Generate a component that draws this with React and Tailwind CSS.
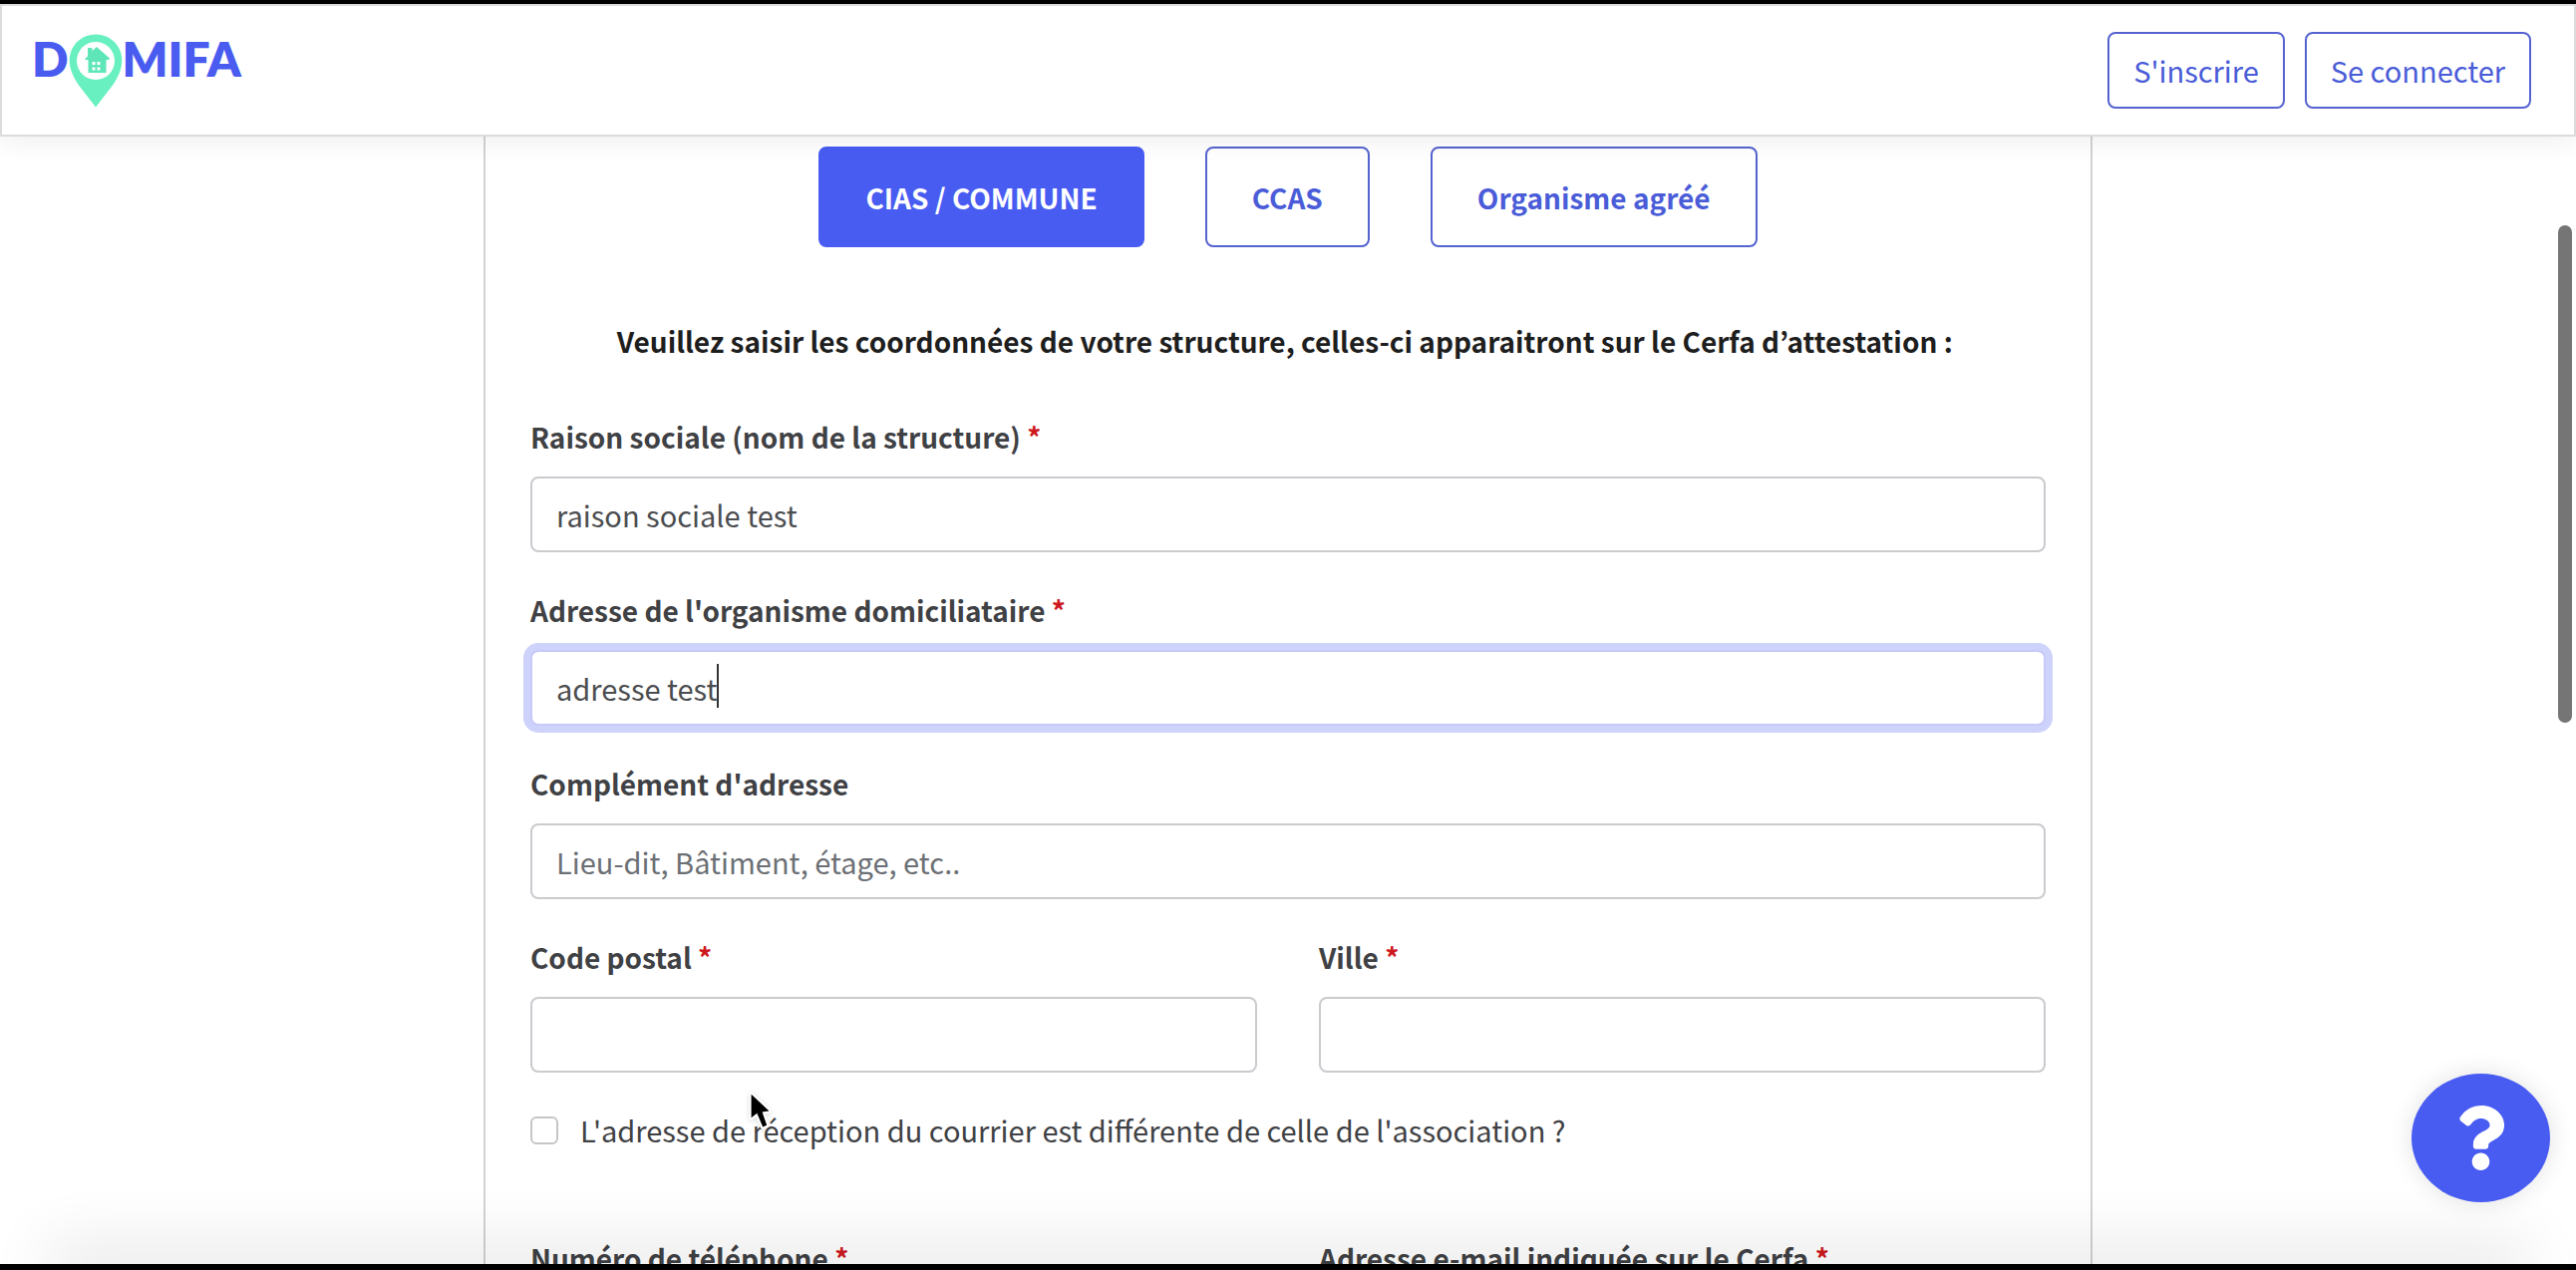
import { useId } from "react";
import { FaQuestion } from "react-icons/fa";

function Logo() {
  return (
    <a href="#accueil" aria-label="Domifa" className="flex items-start font-['Lato',sans-serif] text-[48px] leading-[54px] font-extrabold text-[#4a5cf0]">
      <span>D</span>
      <svg viewBox="0 0 54 74" className="mt-0.5 h-[74px] w-[54px]" aria-hidden="true">
        <path d="M27 .5C12.300.5.7 12 .7 26.500C.7 36 5 44 10 51.500L27 73.500L44 51.500C49 44 53.300 36 53.300 26.500C53.300 12 41.700.5 27 .5Z" fill="#68f0c0" />
        <circle cx="27" cy="27" r="19" fill="#fff" />
        <path d="M19 14h4.500v3l4.500-4 13 11.500-1 1.500H37.500V39H19.500V26H16.500v-1.500l2.500-2Z" fill="#5fe6b8" />
        <path d="M23.500 28h3v3h-3zM28.500 28h3v3h-3zM23.500 33.500h3v3h-3zM28.500 33.500h3v3h-3z" fill="#fff" />
      </svg>
      <span>MIFA</span>
    </a>
  );
}

function Field({ label, required, className = "", focused, ...props }) {
  const id = useId();
  return (
    <div className={className}>
      <label htmlFor={id} className="block h-[58px] text-[28px] leading-9 font-bold">
        {label} {required && <span className="text-[#ce1a1f]">*</span>}
      </label>
      <div className="relative">
        <input
          id={id}
          type="text"
          autoFocus={focused}
          className="block h-[76px] w-full rounded-lg border-2 border-[#c9cbce] bg-white px-6 text-[#4b4d50] caret-transparent outline-none placeholder:text-[#6c7075] placeholder:opacity-100 focus:border-[#c5cafa] focus:ring-[7px] focus:ring-[#ced3fb]"
          {...props}
        />
        {focused && <span className="absolute top-[14px] left-[187px] h-11 w-0.5 bg-[#333]" aria-hidden="true" />}
      </div>
    </div>
  );
}

function Pointer() {
  return (
    <svg viewBox="-4 -4 26 38" className="pointer-events-none absolute top-[-23px] left-[217px] h-[44px] w-[30px] drop-shadow-sm" aria-hidden="true">
      <path d="M0 0V20.500L5 16.500L10 28.500L13.500 27L9.500 15.500L15.500 14.500Z" fill="#000" stroke="#fff" strokeWidth="4" strokeLinejoin="round" paintOrder="stroke" />
    </svg>
  );
}

export default function App() {
  return (
    <div className="relative h-screen overflow-hidden bg-white font-['Noto_Sans_CJK_JP',sans-serif] text-[29px] text-[#3f4144]">
      <header className="relative z-10 border-t-4 border-black bg-white shadow-[0_4px_24px_rgba(0,0,0,0.07)]">
        <div className="flex h-[133px] items-start justify-between border-2 border-[#dcdcdc] pt-[26px] pr-[43px] pl-[30px]">
          <Logo />
          <nav className="flex gap-5 text-[#4a5cd8]">
            <button type="button" className="h-[77px] rounded-lg border-2 border-[#5563d0] px-6">S'inscrire</button>
            <button type="button" className="h-[77px] rounded-lg border-2 border-[#5563d0] px-6">Se connecter</button>
          </nav>
        </div>
      </header>

      <main className="mx-auto max-w-[1614px] border-x-2 border-[#d2d2d2] px-[45px] pt-[10px]">
        <div className="flex justify-center gap-[61px] text-[28px] font-bold text-[#4a5cd8]">
          <button type="button" className="h-[101px] rounded-lg border-2 border-[#485cf2] bg-[#485cf2] px-[45px] text-white">CIAS / COMMUNE</button>
          <button type="button" className="h-[101px] rounded-lg border-2 border-[#5563d0] px-[45px]">CCAS</button>
          <button type="button" className="h-[101px] rounded-lg border-2 border-[#5563d0] px-[45px]">Organisme agréé</button>
        </div>
        <p className="mt-[76px] text-center text-[28px] leading-9 font-bold text-[#1e1e1e]">
          Veuillez saisir les coordonnées de votre structure, celles-ci apparaitront sur le Cerfa d’attestation :&nbsp;
        </p>
        <form className="mt-[60px] grid grid-cols-2 gap-x-[62px] gap-y-10">
          <Field className="col-span-2" label="Raison sociale (nom de la structure)" required defaultValue="raison sociale test" />
          <Field className="col-span-2" label="Adresse de l'organisme domiciliataire" required focused defaultValue="adresse test" />
          <Field className="col-span-2" label="Complément d'adresse" placeholder="Lieu-dit, Bâtiment, étage, etc.." />
          <Field label="Code postal" required />
          <Field label="Ville" required />
          <div className="relative col-span-2">
            <label className="flex h-9 items-center gap-[22px]">
              <input type="checkbox" className="size-7 appearance-none rounded-md border-2 border-[#c6c6c6] bg-white" />
              L'adresse de réception du courrier est différente de celle de l'association ?
            </label>
            <Pointer />
          </div>
          <Field className="mt-[52px]" label="Numéro de téléphone" required />
          <Field className="mt-[52px]" label="Adresse e-mail indiquée sur le Cerfa" required />
        </form>
      </main>

      {/* Scrollbar thumb */}
      <div className="absolute top-[226px] right-1 h-[499px] w-3.5 rounded-full bg-[#757575]" />

      {/* Footer edge casting its shadow upwards */}
      <div className="pointer-events-none absolute inset-x-0 bottom-0 h-1.5 px-16">
        <div className="h-full shadow-[0_0_64px_16px_rgba(0,0,0,0.12)]" />
      </div>
      <div className="absolute inset-x-0 bottom-0 h-1.5 bg-black" />

      <button type="button" aria-label="Aide" className="absolute right-[26px] bottom-[68px] flex h-[129px] w-[139px] items-center justify-center rounded-[50%] bg-[#485cf2] text-white shadow-[0_0_24px_rgba(0,0,0,0.12)]">
        <FaQuestion className="h-[65px] w-[49px]" />
      </button>
    </div>
  );
}
